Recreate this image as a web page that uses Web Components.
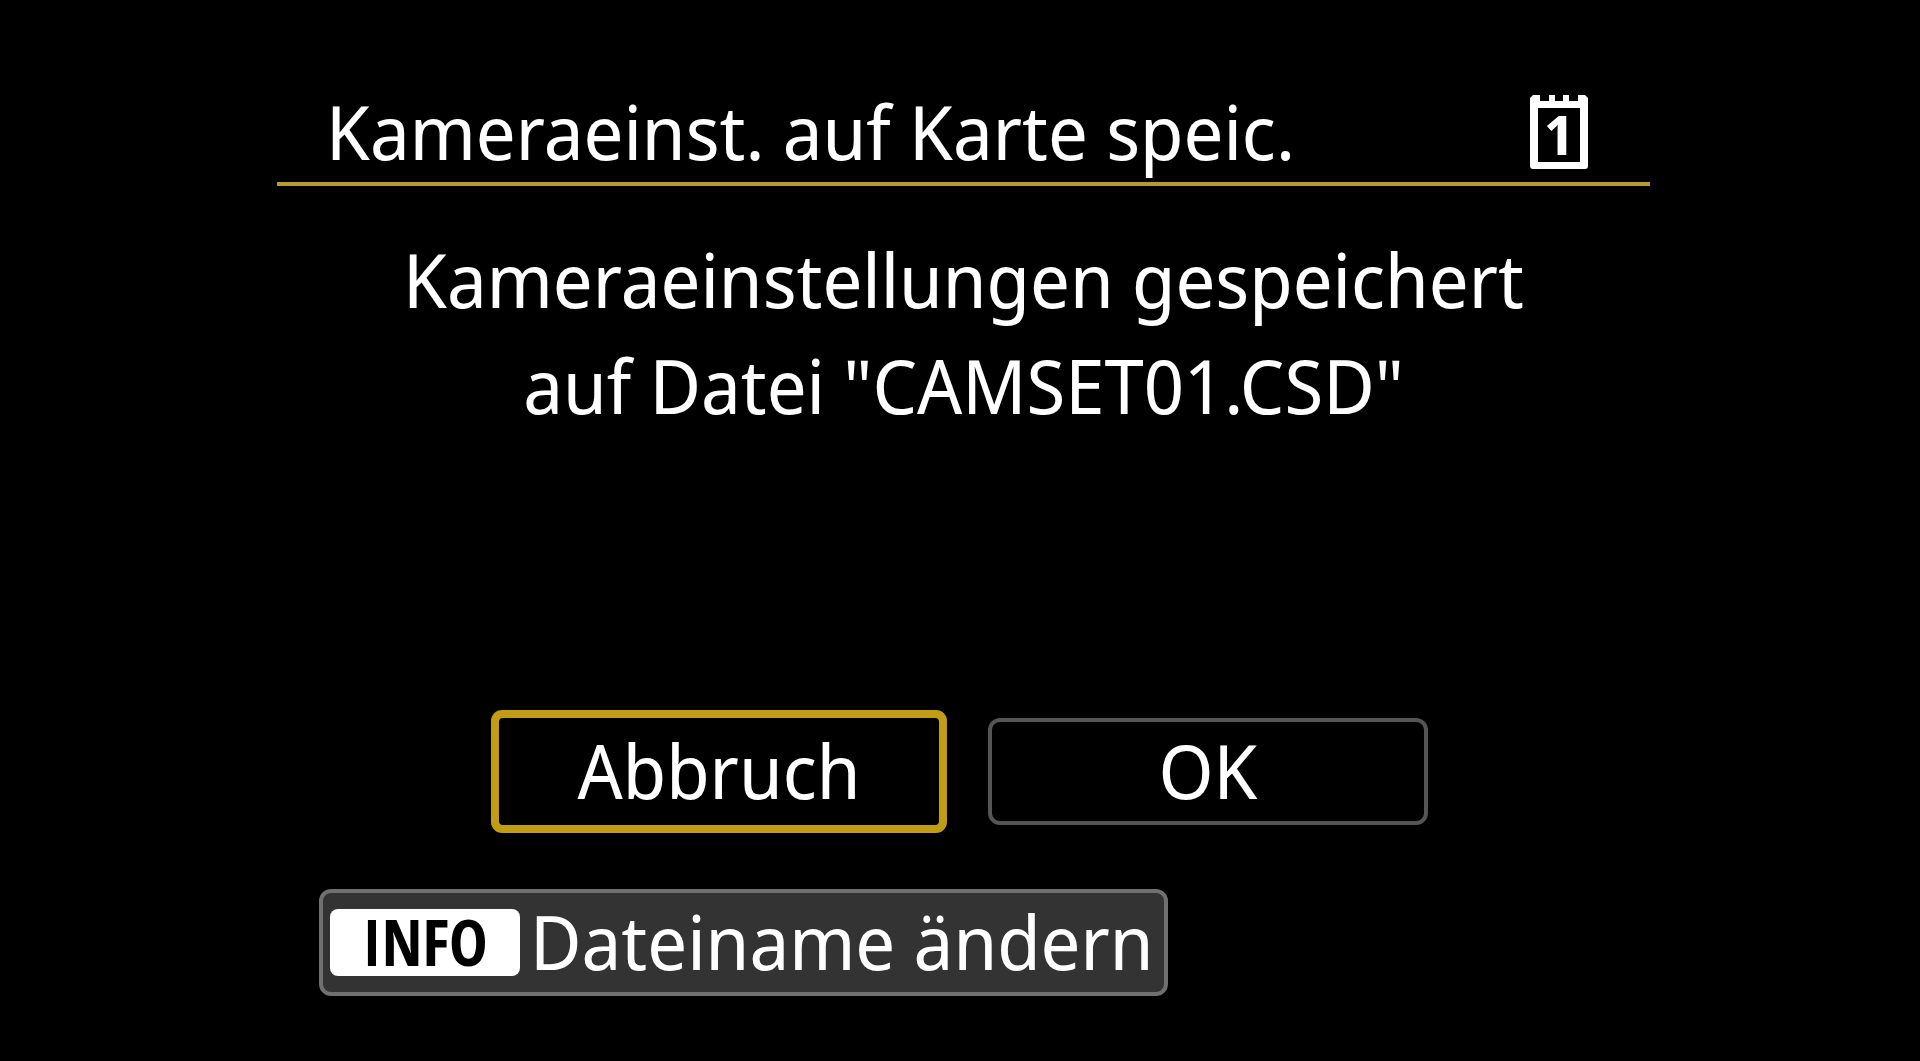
<!DOCTYPE html>
<html lang="de">
<head>
<meta charset="utf-8">
<meta name="viewport" content="width=device-width, initial-scale=1">
<title>Kameraeinst. auf Karte speic.</title>
<style>
  html { background: #000; }
  body {
    margin: 0;
    background: #000;
    color: #fff;
    font: 400 75px/102px "Noto Sans Display", "Noto Sans", "Open Sans", sans-serif;
    --accent: #c19d16;
    --outline: #555;
  }
</style>
</head>
<body>
<camera-dialog>
  <dialog-header slot="header">Kameraeinst. auf Karte speic.<card-icon slot="icon" number="1"></card-icon></dialog-header>
  <dialog-message>Kameraeinstellungen gespeichert<br>auf Datei "CAMSET01.CSD"</dialog-message>
  <camera-button slot="actions" selected>Abbruch</camera-button>
  <camera-button slot="actions">OK</camera-button>
  <info-button slot="footer" key-label="INFO">Dateiname ändern</info-button>
</camera-dialog>
<script>
  class BaseElement extends HTMLElement {
    connectedCallback() {
      if (!this.shadowRoot) {
        this.attachShadow({ mode: 'open' }).innerHTML = this.render();
      }
    }
  }

  customElements.define('camera-dialog', class extends BaseElement {
    render() {
      return `
        <style>
          :host { display: block; }
          main {
            box-sizing: border-box;
            min-height: 100vh;
            padding: 80px 270px 65px 277px;
            display: flex;
            flex-direction: column;
          }
          .content { flex: 1; padding-top: 40px; }
          .actions { display: flex; justify-content: center; gap: 49px; }
          footer { display: flex; padding: 64px 42px 0; }
        </style>
        <main>
          <slot name="header"></slot>
          <div class="content"><slot></slot></div>
          <div class="actions"><slot name="actions"></slot></div>
          <footer><slot name="footer"></slot></footer>
        </main>`;
    }
  });

  customElements.define('dialog-header', class extends BaseElement {
    render() {
      return `
        <style>
          :host { display: block; }
          header {
            display: flex;
            align-items: center;
            justify-content: space-between;
            padding: 0 62px 0 49px;
            border-bottom: 4px solid #b89a30;
          }
          h1 { margin: 0; font: inherit; }
        </style>
        <header><h1><slot></slot></h1><slot name="icon"></slot></header>`;
    }
  });

  customElements.define('card-icon', class extends BaseElement {
    render() {
      return `
        <style>
          :host { display: block; }
          svg { display: block; overflow: visible; }
          text { font-weight: 700; font-size: 53px; }
        </style>
        <svg width="58" height="76" viewBox="0 0 58 76" role="img" aria-label="Karte ${this.getAttribute('number')}">
          <path fill="#fff" fill-rule="evenodd" d="M3 2H10V8H19V2H25V8H33V2H39V8H48V2H55L58 5V73Q58 76 55 76H3Q0 76 0 73V5ZM8 15V69H50V15Z"/>
          <text x="29" y="62" text-anchor="middle" fill="#fff">${this.getAttribute('number')}</text>
        </svg>`;
    }
  });

  customElements.define('dialog-message', class extends BaseElement {
    render() {
      return `
        <style>
          :host { display: block; }
          p { margin: 0; text-align: center; line-height: 106px; }
        </style>
        <p><slot></slot></p>`;
    }
  });

  customElements.define('camera-button', class extends BaseElement {
    render() {
      return `
        <style>
          :host { display: block; flex: 0 1 440px; }
          button {
            box-sizing: border-box;
            width: 100%;
            height: 107px;
            margin: 0;
            padding: 0 0 4px;
            display: flex;
            align-items: center;
            justify-content: center;
            font: inherit;
            color: inherit;
            background: #000;
            border: 4px solid var(--outline);
            border-radius: 12px;
          }
          :host([selected]) button {
            border-color: #000;
            border-radius: 4px;
            box-shadow: 0 0 0 8px var(--accent);
          }
        </style>
        <button type="button"><slot></slot></button>`;
    }
  });

  customElements.define('info-button', class extends BaseElement {
    render() {
      return `
        <style>
          :host { display: block; }
          button {
            box-sizing: border-box;
            height: 107px;
            margin: 0;
            padding: 0 10px 0 7px;
            display: flex;
            align-items: center;
            gap: 10px;
            font: inherit;
            color: inherit;
            background: #333;
            border: 4px solid #707070;
            border-radius: 12px;
            white-space: nowrap;
          }
          kbd {
            box-sizing: border-box;
            width: 190px;
            height: 67px;
            border-radius: 8px;
            background: #fff;
            color: #000;
            font: 700 65px/64px "Open Sans Condensed", "Open Sans", sans-serif;
            text-align: center;
          }
          .label { padding-bottom: 4px; }
        </style>
        <button type="button"><kbd>${this.getAttribute('key-label')}</kbd><span class="label"><slot></slot></span></button>`;
    }
  });
</script>
</body>
</html>
